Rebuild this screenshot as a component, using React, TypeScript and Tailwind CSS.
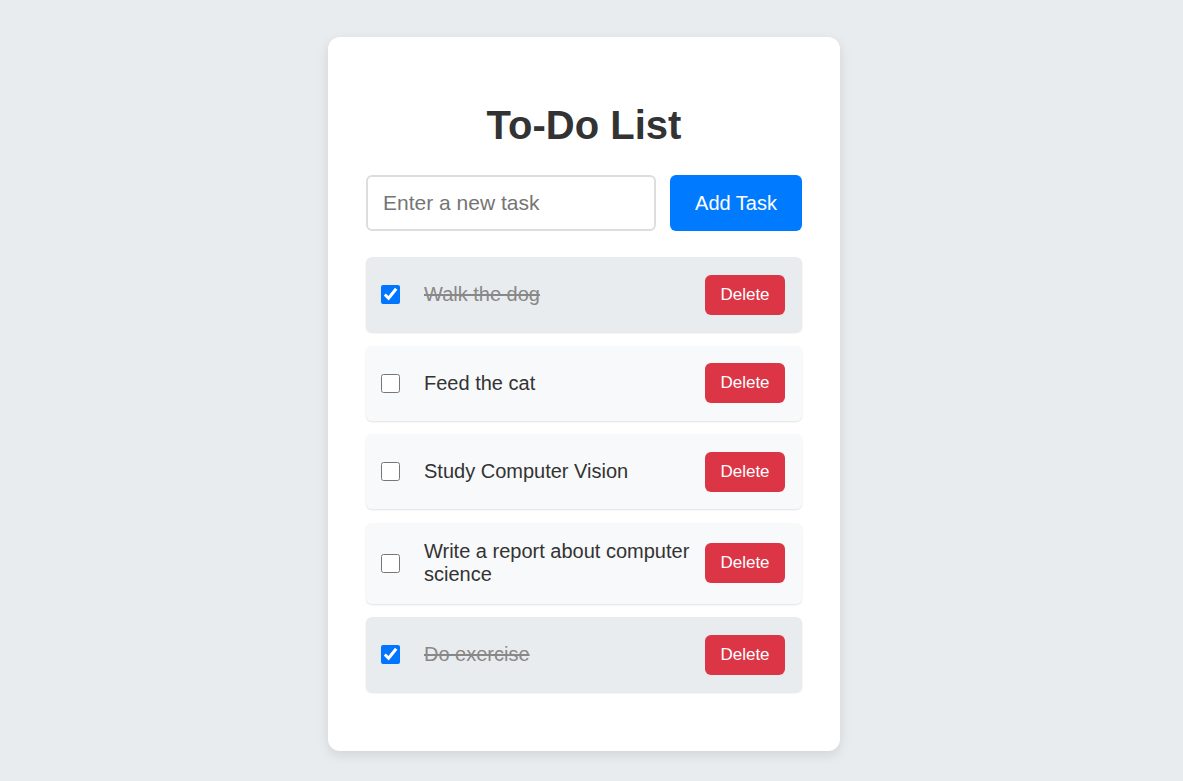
import React, { useState } from "react";

type Task = { id: number; text: string; done: boolean };

const initialTasks: Task[] = [
  { id: 1, text: "Walk the dog", done: true },
  { id: 2, text: "Feed the cat", done: false },
  { id: 3, text: "Study Computer Vision", done: false },
  { id: 4, text: "Write a report about computer science", done: false },
  { id: 5, text: "Do exercise", done: true },
];

const App: React.FC = () => {
  const [tasks, setTasks] = useState<Task[]>(initialTasks);
  const [draft, setDraft] = useState("");

  const addTask = () => {
    if (!draft.trim()) return;
    setTasks((prev) => [...prev, { id: Date.now(), text: draft.trim(), done: false }]);
    setDraft("");
  };

  const toggle = (id: number) =>
    setTasks((prev) => prev.map((t) => (t.id === id ? { ...t, done: !t.done } : t)));

  const remove = (id: number) => setTasks((prev) => prev.filter((t) => t.id !== id));

  return (
    <div
      className="min-h-screen bg-[#e9ecef] flex justify-center pt-[37px] pb-[30px] pr-[15px]"
      style={{ fontFamily: '"Liberation Sans", Arial, sans-serif' }}
    >
      <div className="w-[512px] self-start bg-white rounded-[12px] shadow-[0_4px_12px_rgba(0,0,0,0.1)] px-[38px] pt-[65px] pb-[59px]">
        <h1 className="text-center text-[40px] leading-[46px] font-bold text-[#333] mb-[27px]">
          To-Do List
        </h1>

        <div className="flex gap-[14px]">
          <input
            value={draft}
            onChange={(e) => setDraft(e.target.value)}
            placeholder="Enter a new task"
            className="flex-1 min-w-0 h-[56px] border-2 border-[#ddd] rounded-[6px] px-[15px] text-[21px] text-[#333] placeholder:text-[#757575] outline-none"
          />
          <button
            onClick={addTask}
            className="h-[56px] w-[132px] shrink-0 bg-[#007bff] text-white rounded-[6px] text-[20px]"
          >
            Add Task
          </button>
        </div>

        <ul className="mt-[26px] flex flex-col gap-[13.5px]">
          {tasks.map((t) => (
            <li
              key={t.id}
              className={`flex items-center rounded-[6px] pl-[15px] pr-[17px] py-[17.5px] shadow-[0_1px_2px_rgba(0,0,0,0.12)] ${
                t.done ? "bg-[#e9ecef]" : "bg-[#f8f9fa]"
              }`}
            >
              <input
                type="checkbox"
                checked={t.done}
                onChange={() => toggle(t.id)}
                className="w-[19px] h-[19px] m-0 shrink-0 accent-[#0075ff]"
              />
              <span
                className={`flex-1 ml-[24px] mr-[15px] text-[20px] leading-[23px] ${
                  t.done ? "line-through text-[#888]" : "text-[#333]"
                }`}
              >
                {t.text}
              </span>
              <button
                onClick={() => remove(t.id)}
                className="h-[40px] w-[80px] shrink-0 bg-[#dc3545] text-white rounded-[6px] text-[17px]"
              >
                Delete
              </button>
            </li>
          ))}
        </ul>
      </div>
    </div>
  );
};

export default App;
